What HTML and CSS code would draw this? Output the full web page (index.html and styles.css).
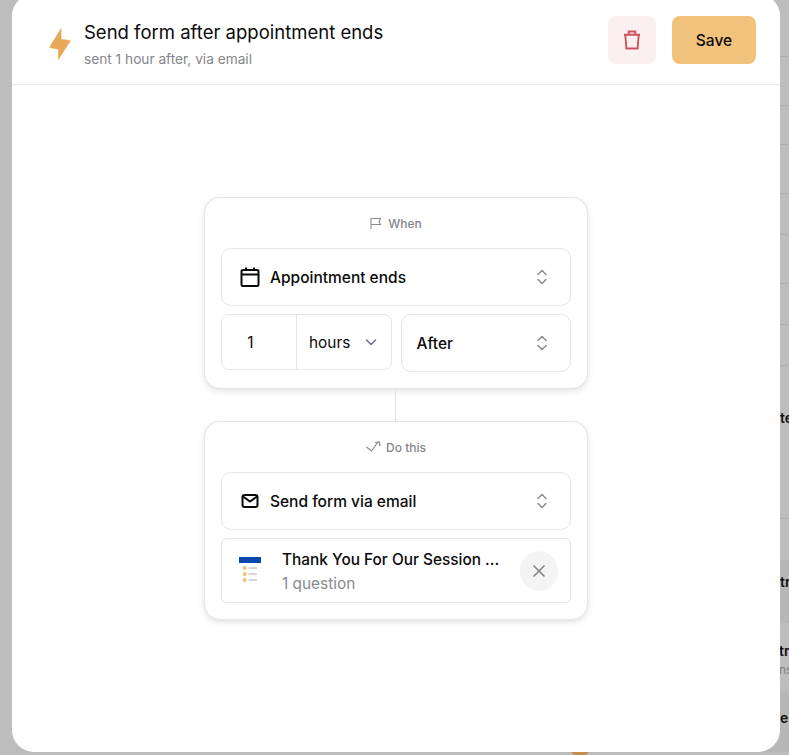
FILE: index.html
```html
<!DOCTYPE html>
<html lang="en">
<head>
<meta charset="utf-8">
<title>Send form after appointment ends</title>
<link rel="stylesheet" href="styles.css">
</head>
<body>
<div class="backdrop">
  <div class="bg-row h57"></div>
  <div class="bg-row h49"></div>
  <div class="bg-row h39"></div>
  <div class="bg-row h49"></div>
  <div class="bg-row h41"></div>
  <div class="bg-row h49"></div>
  <div class="bg-row h41"></div>
  <div class="bg-row h41"></div>
  <div class="bg-row h153"><span class="bg-text t-first">te</span></div>
  <div class="bg-row h41 plain"></div>
  <div class="bg-row h63 dark plain"><span class="bg-text t-second">tr</span></div>
  <div class="bg-row h69 plain"><span class="bg-text t-third">tr</span><span class="bg-sub">ns</span></div>
  <div class="bg-row h64 dark plain"><span class="bg-text t-fourth">e</span></div>
  <span class="avatar"></span>
</div>

<section class="modal">
  <header class="modal-head">
    <svg class="bolt" width="22" height="32" viewBox="0 0 22 32"><path d="M12 .5 .5 19.500 9.300 21.200 9.300 31.500 21.500 12.700 12 11.300z" fill="#e8a85a" stroke="#e8a85a" stroke-width=".6" stroke-linejoin="round"/></svg>
    <div class="head-text">
      <h1 class="title">Send form after appointment ends</h1>
      <p class="subtitle">sent 1 hour after, via email</p>
    </div>
    <button class="btn-delete" aria-label="Delete">
      <svg width="20" height="20" viewBox="0 0 20 20" fill="none" stroke="#c9555f" stroke-width="1.900"><path d="M2 4.700h16M6.700 4V1.500h6.600V4M3.300 5l1.100 13.500h11.200L16.700 5"/></svg>
    </button>
    <button class="btn-save">Save</button>
  </header>

  <div class="canvas">
    <div class="card">
      <div class="card-label">
        <svg width="12" height="14" viewBox="0 0 12 14" fill="none" stroke="#8a8a8f" stroke-width="1.100"><path d="M1 13V2.500h9.500L9 5.500l1.500 3H1"/></svg>
        <span>When</span>
      </div>
      <div class="select">
        <svg class="lead" width="20" height="20" viewBox="0 0 20 20" fill="none" stroke="#0a0a0a" stroke-width="2"><rect x="1.500" y="3" width="17" height="16" rx="1.500"/><path d="M1.500 7.500h17M6 .500V4M14 .500V4"/></svg>
        <span class="select-label">Appointment ends</span>
        <svg class="updown" width="12" height="18" viewBox="0 0 12 18" fill="none" stroke="#8a8a8f" stroke-width="1.500" stroke-linecap="round" stroke-linejoin="round"><path d="M2 6.500 6 2.500l4 4M2 11.500 6 15.500l4-4"/></svg>
      </div>
      <div class="pair">
        <div class="amount">
          <span class="amount-value">1</span>
          <span class="amount-unit">hours
            <svg width="14" height="14" viewBox="0 0 14 14" fill="none" stroke="#6b7280" stroke-width="1.500" stroke-linecap="round" stroke-linejoin="round"><path d="M2.500 5 7 9.500 11.500 5"/></svg>
          </span>
        </div>
        <div class="select compact">
          <span class="select-label">After</span>
          <svg class="updown" width="12" height="18" viewBox="0 0 12 18" fill="none" stroke="#8a8a8f" stroke-width="1.500" stroke-linecap="round" stroke-linejoin="round"><path d="M2 6.500 6 2.500l4 4M2 11.500 6 15.500l4-4"/></svg>
        </div>
      </div>
    </div>

    <div class="connector"></div>

    <div class="card">
      <div class="card-label tight">
        <svg width="15" height="14" viewBox="0 0 15 14" fill="none" stroke="#8a8a8f" stroke-width="1.200"><path d="M.500 7l5 4 6-8.500M9 2.500l4.500-.5.3 4.300"/></svg>
        <span>Do this</span>
      </div>
      <div class="select">
        <svg class="lead" width="20" height="20" viewBox="0 0 20 20" fill="none" stroke="#0a0a0a" stroke-width="2"><rect x="2.500" y="4" width="15" height="12" rx="2"/><path d="M3 5.500l7 5 7-5"/></svg>
        <span class="select-label">Send form via email</span>
        <svg class="updown" width="12" height="18" viewBox="0 0 12 18" fill="none" stroke="#8a8a8f" stroke-width="1.500" stroke-linecap="round" stroke-linejoin="round"><path d="M2 6.500 6 2.500l4 4M2 11.500 6 15.500l4-4"/></svg>
      </div>
      <div class="form-row">
        <svg class="form-icon" width="22" height="28" viewBox="0 0 22 28"><rect x="0" y="0" width="22" height="6" fill="#0a47ae"/><circle cx="5.700" cy="11" r="2" fill="#efc27c"/><circle cx="5.700" cy="17" r="2" fill="#efc27c"/><circle cx="5.700" cy="23" r="2" fill="#efc27c"/><path d="M9.500 11H18M9.500 17H18M9.500 23H18" stroke="#c9c9c9" stroke-width="1.500"/></svg>
        <div class="form-text">
          <span class="form-name">Thank You For Our Session ...</span>
          <span class="form-meta">1 question</span>
        </div>
        <button class="btn-remove" aria-label="Remove">
          <svg width="14" height="14" viewBox="0 0 14 14" fill="none" stroke="#808085" stroke-width="1.500"><path d="M1.500 1.500l11 11M12.500 1.500l-11 11"/></svg>
        </button>
      </div>
    </div>
  </div>
</section>
</body>
</html>
```
FILE: styles.css
```css
* { box-sizing: border-box; }
html, body { margin: 0; height: 100%; overflow: hidden; }
body {
  position: relative;
  width: 789px;
  height: 755px;
  background: #bdbdbd;
  font-family: Inter, "Liberation Sans", sans-serif;
  color: #0a0a0a;
}
.backdrop { display: flex; flex-direction: column; height: 752px; overflow: hidden; }
.bg-row {
  display: flex;
  flex-direction: column;
  flex: none;
  margin-left: 100px;
  padding-left: 680px;
  border-bottom: 1px solid #adadad;
  white-space: nowrap;
}
.bg-row.plain { border-bottom: 0; }
.bg-row.dark { background: #b7b7b7; }
.h39 { height: 39px; } .h41 { height: 41px; } .h49 { height: 49px; } .h57 { height: 57px; }
.h63 { height: 63px; } .h64 { height: 64px; } .h69 { height: 69px; } .h153 { height: 153px; }
.bg-text { font-size: 14px; font-weight: 600; line-height: 18px; color: #111; }
.t-first { margin-top: 43px; }
.t-second { margin-top: 13px; }
.t-third { margin-top: 19px; margin-left: -1px; }
.t-fourth { margin-top: 17px; }
.bg-sub { font-size: 12px; line-height: 14px; color: #808080; margin-top: 3px; margin-left: -1px; }
.avatar { position: absolute; left: 568px; top: 732px; width: 24px; height: 24px; border-radius: 50%; background: #c08f4c; }

.modal {
  position: absolute;
  left: 12px;
  top: -6px;
  width: 768px;
  height: 758px;
  display: flex;
  flex-direction: column;
  background: #fff;
  border-radius: 22px;
  overflow: hidden;
}
.modal-head {
  display: flex;
  align-items: center;
  height: 91px;
  flex: none;
  padding: 1px 24px 0 37px;
  border-bottom: 1px solid #e5e5e7;
}
.bolt { flex: none; margin: 9px 13px 0 0; }
.head-text { flex: 1; min-width: 0; padding-top: 9px; }
.title { margin: 0; font-size: 18.5px; line-height: 26px; font-weight: 400; }
.subtitle { margin: 4px 0 0; font-size: 13.700px; line-height: 20px; color: #85858a; }
.btn-delete, .btn-save, .btn-remove { border: 0; padding: 0; font: inherit; display: flex; align-items: center; justify-content: center; }
.btn-delete { width: 48px; height: 48px; border-radius: 8px; background: #fbeff0; margin-right: 16px; }
.btn-save { width: 84px; height: 48px; padding-top: 2px; border-radius: 8px; background: #f0c27b; font-size: 15.500px; font-weight: 500; color: #0a0a0a; }

.canvas { flex: 1; display: flex; flex-direction: column; align-items: center; padding-top: 112px; }
.card {
  width: 384px;
  padding: 0 16px 16px;
  background: #fff;
  border: 1px solid #e5e5e7;
  border-radius: 16px;
  box-shadow: 0 2px 6px rgba(0, 0, 0, .12);
  display: flex;
  flex-direction: column;
  gap: 8px;
}
.card-label {
  height: 42px;
  padding-top: 8px;
  display: flex;
  align-items: center;
  justify-content: center;
  gap: 6px;
  font-size: 12px;
  font-weight: 500;
  color: #85858a;
}
.card-label.tight { gap: 5px; }
.select {
  height: 58px;
  display: flex;
  align-items: center;
  padding: 0 22px 0 18px;
  border: 1px solid #e5e5e7;
  border-radius: 10px;
}
.select-label { flex: 1; font-size: 15.500px; font-weight: 500; }
.lead { flex: none; margin-right: 10px; }
.updown { flex: none; }
.pair { display: grid; grid-template-columns: 1fr 1fr; gap: 9px; }
.amount {
  height: 56px;
  display: flex;
  border: 1px solid #e5e5e7;
  border-radius: 8px;
  font-size: 15.400px;
}
.amount-value { width: 75px; flex: none; display: flex; align-items: center; justify-content: center; padding-right: 17px; border-right: 1px solid #e5e5e7; }
.amount-unit { flex: 1; display: flex; align-items: center; justify-content: space-between; padding: 0 13px 0 12px; }
.compact { padding-left: 15px; }
.connector { width: 1px; height: 32px; margin-right: 1px; background: #e5e5e7; flex: none; }
.form-row {
  height: 65px;
  display: flex;
  align-items: center;
  padding: 0 12px 0 17px;
  border: 1px solid #e5e5e7;
  border-radius: 6px;
}
.form-icon { flex: none; margin-right: 21px; }
.form-text { flex: 1; min-width: 0; display: flex; flex-direction: column; gap: 4px; padding-top: 2px; }
.form-name { font-size: 15.400px; font-weight: 500; line-height: 20px; }
.form-meta { font-size: 15.400px; line-height: 20px; color: #8a8a8f; }
.btn-remove { width: 38px; height: 40px; border-radius: 50%; background: #f4f4f4; flex: none; }
```
